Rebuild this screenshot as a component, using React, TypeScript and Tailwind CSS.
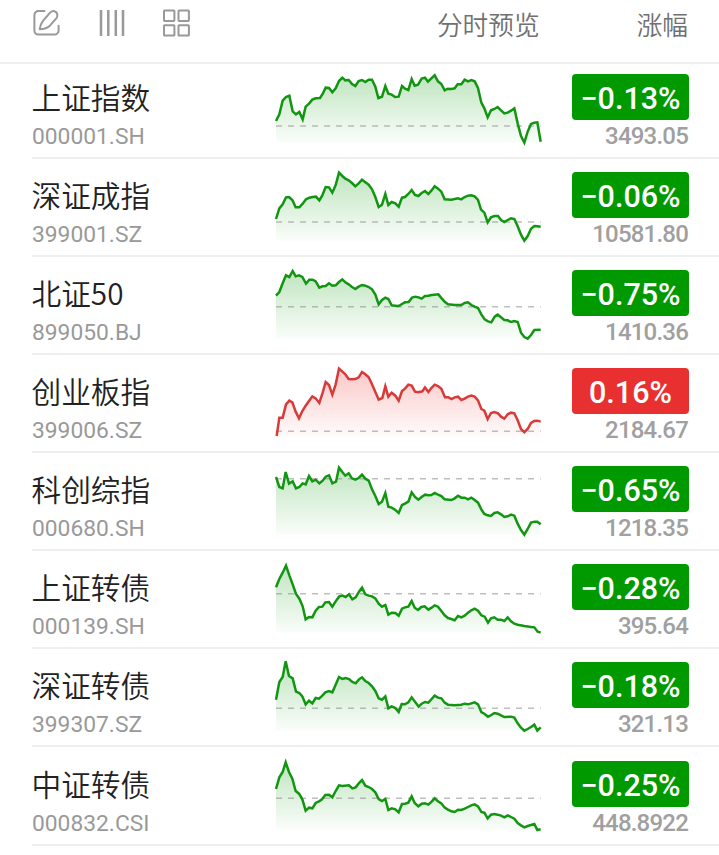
import clsx from "clsx";

interface IndexQuote {
  name: string;
  code: string;
  change: string;
  price: string;
  up?: boolean;
  // y of the previous close line
  base: number;
  line: string;
}

const LEFT = 18;
const RIGHT = 812;
const BOTTOM = 230;

const quotes: IndexQuote[] = [
  {
    name: "上证指数",
    code: "000001.SH",
    change: "−0.13%",
    price: "3493.05",
    base: 180,
    line: "18,165 28,145 38,104 48,93 58,89 68,136 78,145 88,138 98,160 107,122 117,113 127,101 137,97 150,96 158,84 167,65 177,66 187,79 197,67 207,45 217,35 226,43 236,42 246,54 256,60 266,45 276,42 286,48 296,41 306,41 316,62 325,96 336,92 346,60 355,83 365,86 375,93 386,92 396,60 405,68 415,72 425,39 434,59 444,56 455,38 465,35 474,47 484,37 494,28 504,46 514,54 524,73 533,68 544,69 554,67 563,55 574,55 584,41 594,46 604,42 614,46 624,66 634,110 643,127 653,154 663,133 673,129 683,123 693,133 703,142 713,140 723,134 733,127 743,172 753,210 763,230 773,197 783,174 793,170 802,169 812,227",
  },
  {
    name: "深证成指",
    code: "399001.SZ",
    change: "−0.06%",
    price: "10581.80",
    base: 174,
    line: "18,165 28,133 38,121 48,100 57,99 67,108 77,130 88,130 98,119 108,106 118,101 128,99 138,98 148,109 157,94 167,69 177,70 187,86 197,63 207,26 217,36 226,44 236,49 246,57 256,67 266,58 276,47 286,55 296,62 306,76 316,99 326,129 336,122 346,90 355,123 365,114 376,118 386,128 396,101 405,99 415,90 425,78 435,93 445,96 455,87 465,81 475,90 484,80 494,67 504,74 514,83 524,106 544,107 564,103 574,106 584,99 594,95 604,94 614,97 624,108 633,137 643,146 653,175 663,160 673,156 684,156 693,168 703,174 713,168 723,163 733,165 743,187 753,212 763,230 773,216 783,194 793,186 802,187 812,188",
  },
  {
    name: "北证50",
    code: "899050.BJ",
    change: "−0.75%",
    price: "1410.36",
    base: 134,
    line: "18,101 28,90 38,64 48,40 58,45 68,27 77,43 87,40 97,45 108,65 118,53 128,53 137,58 148,77 157,73 167,72 177,64 187,71 197,70 207,60 217,52 226,61 236,67 246,75 256,81 266,74 276,69 286,71 296,75 306,82 316,98 326,127 336,114 346,107 355,111 365,130 375,131 386,132 396,126 405,121 416,120 426,107 436,104 446,106 455,110 465,102 475,101 485,99 505,97 515,109 525,120 534,127 554,129 574,129 584,123 594,121 604,129 614,134 624,138 634,157 644,172 654,178 664,181 674,164 683,158 693,166 703,174 713,175 723,180 733,177 743,180 753,212 763,225 773,230 783,219 793,204 812,203",
  },
  {
    name: "创业板指",
    code: "399006.SZ",
    change: "0.16%",
    price: "2184.67",
    up: true,
    base: 214,
    line: "20,228 28,173 38,173 48,133 58,122 67,127 77,155 87,175 97,153 107,137 117,123 127,109 137,115 148,129 158,98 167,66 177,75 187,104 197,73 207,26 217,35 226,43 236,57 246,58 256,57 266,52 276,36 286,43 296,52 306,73 316,96 326,119 337,114 346,79 355,110 365,98 376,107 386,122 396,93 405,86 415,74 425,77 435,95 445,97 457,94 465,82 475,96 484,84 494,74 504,78 514,86 525,112 535,112 545,117 554,112 564,110 574,120 584,116 594,110 604,107 614,110 624,121 634,147 643,152 653,177 663,159 673,156 684,160 693,170 703,176 713,163 723,158 733,160 743,181 753,207 763,217 773,207 783,189 793,183 802,182 812,185",
  },
  {
    name: "科创综指",
    code: "000680.SH",
    change: "−0.65%",
    price: "1218.35",
    base: 62,
    line: "18,57 28,87 38,91 47,42 57,77 68,70 78,91 88,87 98,76 107,79 117,54 127,70 137,65 148,76 158,68 167,56 177,52 187,76 198,71 207,29 217,42 226,53 236,46 246,61 256,65 266,60 276,50 286,62 296,68 306,94 316,114 326,138 336,131 346,105 355,146 365,149 375,155 386,165 396,141 405,137 415,131 425,103 435,117 445,125 455,117 465,110 475,112 484,111 494,105 504,110 514,114 524,124 544,126 554,121 564,113 574,119 584,119 594,124 604,119 614,126 624,134 634,154 643,168 653,172 663,174 673,165 683,163 693,169 703,177 713,175 723,170 733,173 743,197 753,216 763,230 773,213 783,194 793,191 802,191 812,199",
  },
  {
    name: "上证转债",
    code: "000139.SH",
    change: "−0.28%",
    price: "395.64",
    base: 113,
    line: "18,94 28,69 38,50 48,29 58,58 68,85 78,114 88,128 98,151 107,190 117,183 127,184 137,164 147,153 157,152 166,139 177,138 187,152 197,136 207,122 217,119 227,123 237,115 247,130 257,124 267,107 276,95 286,115 296,119 306,121 316,127 326,143 336,152 346,147 355,176 365,170 376,171 386,179 396,158 405,154 415,152 425,135 434,155 444,162 454,153 464,151 475,161 485,155 494,148 504,152 514,165 524,178 534,186 544,189 554,193 564,180 574,184 584,179 594,170 604,163 614,158 624,164 634,178 644,182 654,200 663,187 673,184 683,191 693,191 703,195 713,184 723,196 733,203 743,206 763,210 783,213 793,214 803,227 812,230",
  },
  {
    name: "深证转债",
    code: "399307.SZ",
    change: "−0.18%",
    price: "321.13",
    base: 163,
    line: "18,137 28,84 38,69 47,22 57,66 68,73 78,113 88,117 97,127 107,151 117,140 127,148 137,132 147,134 157,125 166,115 177,111 187,115 197,92 207,69 217,75 227,72 237,75 247,84 257,88 267,76 276,70 286,81 296,87 306,97 316,111 326,133 336,137 346,127 355,163 365,157 376,162 386,174 395,150 405,151 415,145 425,130 435,143 446,158 455,149 465,144 475,146 485,135 494,125 504,131 514,133 524,146 534,152 554,154 574,152 584,149 594,151 604,148 614,145 624,151 634,174 643,179 654,188 664,183 673,177 683,179 693,184 703,189 723,188 733,191 743,208 753,221 763,230 773,225 783,219 793,212 802,230 812,220",
  },
  {
    name: "中证转债",
    code: "000832.CSI",
    change: "−0.25%",
    price: "448.8922",
    base: 136,
    line: "18,108 28,73 38,57 47,28 57,57 67,77 77,114 87,122 97,139 107,173 117,164 127,166 137,150 147,145 156,139 166,126 177,125 187,133 197,114 207,97 217,99 237,97 247,106 257,103 267,90 276,81 286,98 296,102 306,108 316,118 326,138 336,144 346,138 355,171 365,166 376,169 386,178 396,153 405,152 415,149 425,130 434,150 445,160 455,152 465,151 475,155 485,146 494,136 504,145 514,151 524,164 534,170 544,175 554,177 564,170 574,171 584,167 594,162 604,157 614,154 624,160 634,177 643,179 653,196 663,185 673,183 683,185 693,188 703,193 713,187 723,192 733,197 743,210 753,217 763,223 773,219 783,216 793,213 802,231 812,229",
  },
];

const EditIcon = () => (
  <svg
    className="h-[30px] w-[30px]"
    viewBox="0 0 30 30"
    fill="none"
    stroke="#999999"
    strokeWidth="2"
    strokeLinecap="round"
    strokeLinejoin="round"
  >
    <path d="M12.5 3H6.4a4 4 0 0 0-4 4v15.6a4 4 0 0 0 4 4h16a4.2 4.2 0 0 0 4.2-4.2v-4.7" />
    <path d="M7.7 21.2c.3-3.6 1.3-5.8 3.3-8.3l6.4-7.6c1.9-2.2 4.4-2.7 6.3-1.4 2 1.5 2.3 4.2.6 6.4l-6.4 7.4c-2.4 2.4-5.8 3.4-10.2 3.5Z" />
  </svg>
);

const ColumnsIcon = () => (
  <svg
    className="h-[30px] w-[30px]"
    viewBox="0 0 30 30"
    stroke="#999999"
    strokeWidth="2.5"
  >
    <path d="M4 2v26M11.3 2v26M18.8 2v26M26 2v26" />
  </svg>
);

const GridIcon = () => (
  <svg
    className="h-[30px] w-[30px]"
    viewBox="0 0 30 30"
    fill="none"
    stroke="#999999"
    strokeWidth="2"
  >
    <rect x="2" y="2.5" width="10.4" height="10.4" rx="0.6" />
    <rect x="16.5" y="2.5" width="10.4" height="10.4" rx="0.6" />
    <rect x="2" y="17.2" width="10.4" height="10.4" rx="0.6" />
    <rect x="16.5" y="17.2" width="10.4" height="10.4" rx="0.6" />
  </svg>
);

const Sparkline = ({ quote }: { quote: IndexQuote }) => {
  const id = `fill-${quote.code}`;
  const color = quote.up ? "#d83a3a" : "#129612";

  return (
    <svg className="h-[90px] w-[280px] shrink-0" viewBox="0 0 840 270">
      <defs>
        <linearGradient
          id={id}
          gradientUnits="userSpaceOnUse"
          x1="0"
          y1="25"
          x2="0"
          y2={BOTTOM}
        >
          <stop offset="0" stopColor={quote.up ? "#f03030" : "#109c10"} stopOpacity="0.27" />
          <stop offset="1" stopColor={quote.up ? "#f03030" : "#109c10"} stopOpacity="0.02" />
        </linearGradient>
      </defs>
      <polygon
        points={`${LEFT},${BOTTOM} ${quote.line} ${RIGHT},${BOTTOM}`}
        fill={`url(#${id})`}
      />
      <path
        d={`M${LEFT} ${quote.base}H${RIGHT}`}
        stroke="#808080"
        strokeOpacity="0.5"
        strokeWidth="4.5"
        strokeDasharray="18 18"
      />
      <polyline
        points={quote.line}
        fill="none"
        stroke={color}
        strokeWidth="7.5"
        strokeLinejoin="miter"
      />
    </svg>
  );
};

const QuoteRow = ({ quote }: { quote: IndexQuote }) => (
  <div className="ml-8 flex h-[98px] border-b-2 border-[#eeeeee] last:h-[99px] last:pt-px">
    <div className="w-[238px] shrink-0 pt-[13px]">
      <div className="-ml-[0.5px] h-[46px] text-[29.7px] leading-[46px] font-[350] text-[#222222]">
        {quote.name}
      </div>
      <div className="h-[30px] font-[Roboto] text-[22.8px] leading-[34px] text-[#999999]">
        {quote.code}
      </div>
    </div>
    <div className="pt-[5px]">
      <Sparkline quote={quote} />
    </div>
    <div className="ml-[22px] w-[117px] shrink-0 pt-[12.5px] font-[Roboto]">
      <div
        className={clsx(
          "h-[46px] rounded-[4px] text-center text-[30.5px] leading-[50px] font-medium whitespace-nowrap text-white",
          quote.up ? "bg-[#e83030]" : "bg-[#009900]"
        )}
      >
        {quote.change}
      </div>
      <div className="flex justify-end pr-px text-[24px] leading-[32px] font-medium tracking-[-0.8px] text-[#a0a0a0]">
        {quote.price}
      </div>
    </div>
  </div>
);

const App = () => {
  return (
    <div className="h-[855px] w-[719px] overflow-hidden bg-white font-['Noto_Sans_CJK_SC',sans-serif]">
      <header className="-mb-[3px] flex h-[64px] border-b-2 border-[#eeeeee] pr-[31px] pl-[32px] text-[25.7px] font-[350] text-[#707070]">
        <div className="flex gap-[35px] pt-[8px]">
          <EditIcon />
          <ColumnsIcon />
          <GridIcon />
        </div>
        <span className="ml-auto leading-[47px]">分时预览</span>
        <span className="ml-[97px] leading-[47px]">涨幅</span>
      </header>
      <div>
        {quotes.map((quote) => (
          <QuoteRow key={quote.code} quote={quote} />
        ))}
      </div>
    </div>
  );
};

export default App;
